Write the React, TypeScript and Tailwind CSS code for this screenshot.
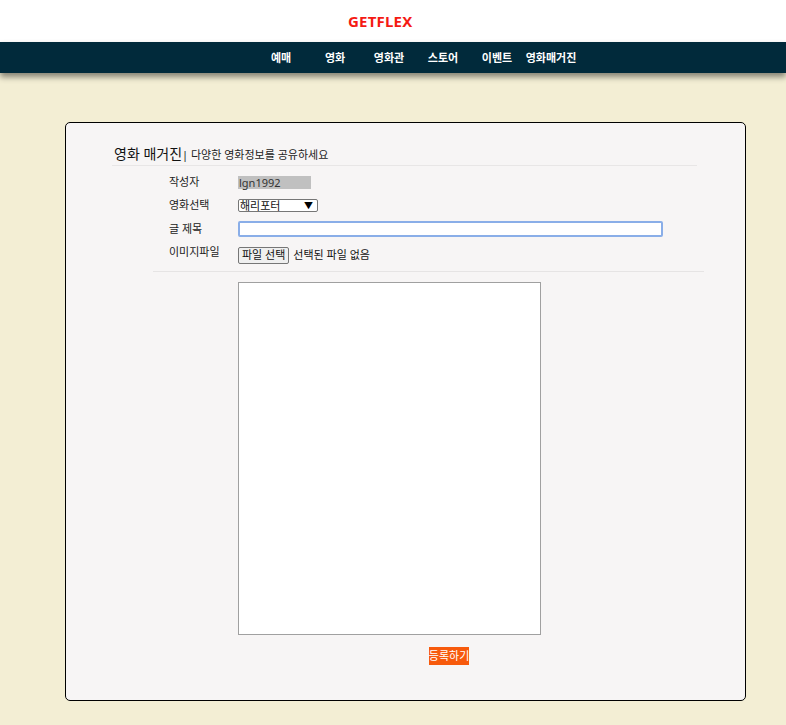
import React from 'react';

const menus = ['예매', '영화', '영화관', '스토어', '이벤트', '영화매거진'];

const font = { fontFamily: '"Noto Sans", "Noto Sans CJK KR", sans-serif' };

const App: React.FC = () => {
  return (
    <div className="min-h-[725px] bg-[#f3eed4] text-[#111]" style={font}>
      {/* Header */}
      <div className="h-[42px] bg-white flex items-center">
        <div className="ml-[348px] text-[15px] font-bold text-[#f51a14] tracking-[0.2px] leading-none">GETFLEX</div>
      </div>

      {/* Nav */}
      <div className="relative h-[31px] bg-[#012a3b] shadow-[0_4px_6px_rgba(0,0,0,0.45)] flex items-center pl-[254px]">
        {menus.map((m) => (
          <div key={m} className="w-[54px] text-center whitespace-nowrap text-white text-[11px] font-bold leading-none">
            {m}
          </div>
        ))}
      </div>

      {/* Card */}
      <div className="pt-[49px] pb-[24px]">
        <div className="ml-[65px] w-[681px] h-[579px] bg-[#f7f5f5] border border-black rounded-[5px]">
          {/* Title */}
          <div className="ml-[46px] mt-[23px] w-[585px] h-[20px] border-b border-[#e8e6e6] flex items-end pb-[2px] pl-[2px]">
            <span className="text-[14px] leading-[18px] text-[#111]">영화 매거진</span>
            <span className="text-[11px] leading-[16px] text-[#222]">| 다양한 영화정보를 공유하세요</span>
          </div>

          {/* Form rows */}
          <div className="ml-[103px] mt-[5px]">
            <div className="h-[23px] flex items-center">
              <div className="w-[69px] text-[11px] text-[#222]">작성자</div>
              <div className="w-[73px] h-[13px] bg-[#c0c0c0] text-[11px] leading-[13px] text-[#333] pl-[1px]">lgn1992</div>
            </div>
            <div className="h-[23px] flex items-center">
              <div className="w-[69px] text-[11px] text-[#222]">영화선택</div>
              <div className="w-[80px] h-[13px] bg-white border border-[#767676] rounded-[2px] flex items-center justify-between pl-[1px] pr-[4px] overflow-hidden">
                <span className="text-[11px] leading-[11px] text-[#111]">해리포터</span>
                <span className="text-[9px] leading-none text-black">▼</span>
              </div>
            </div>
            <div className="h-[24px] flex items-center">
              <div className="w-[69px] text-[11px] text-[#222]">글 제목</div>
              <div className="w-[425px] h-[16px] bg-white border-2 border-[#8aaee8] rounded-[2px]"></div>
            </div>
            <div className="mt-[3px] h-[23px] flex items-center">
              <div className="w-[69px] text-[11px] leading-[15px] text-[#222] self-start">이미지파일</div>
              <div className="h-[17px] px-[3px] bg-[#efefef] border border-[#767676] rounded-[2px] flex items-center text-[11px] text-[#111]">
                파일 선택
              </div>
              <span className="ml-[4px] text-[11px] text-[#111]">선택된 파일 없음</span>
            </div>
          </div>

          {/* Divider */}
          <div className="ml-[87px] mt-[4px] w-[551px] border-t border-[#e6e4e4]"></div>

          {/* Textarea */}
          <div className="ml-[172px] mt-[10px] w-[303px] h-[353px] bg-white border border-[#a0a0a0]"></div>

          {/* Submit */}
          <div className="ml-[363px] mt-[12px] w-[40px] h-[18px] bg-[#f75a0c] flex items-center justify-center overflow-hidden text-white text-[11px] whitespace-nowrap">
            등록하기
          </div>
        </div>
      </div>
    </div>
  );
};

export default App;
